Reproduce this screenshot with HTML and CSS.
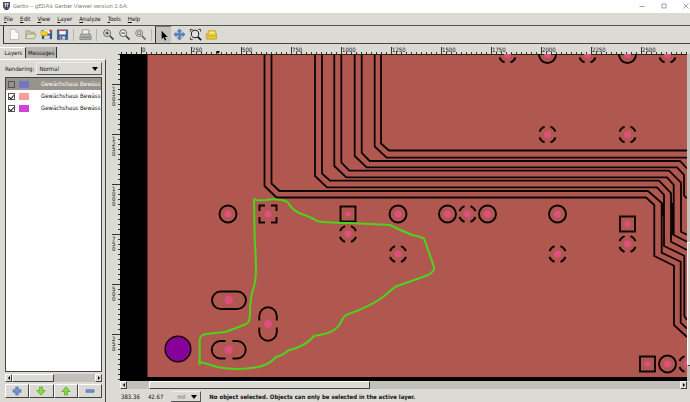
FILE: index.html
```
<!DOCTYPE html>
<html lang="en">
<head>
    <meta charset="UTF-8">
    <meta name="viewport" content="width=device-width, initial-scale=1.0">
    <title>Gerbv</title>
    <link rel="stylesheet" href="styles.css">
</head>
<body>

    <header class="titlebar">
        <svg class="app-icon" viewBox="0 0 9 10"><path d="M1 1h7v5l-2 3H3L1 6z" fill="#4a5162"/><path d="M2 3h5M3.5 2v4M5.5 2v4" stroke="#dfe3ea" stroke-width=".8"/></svg>
        <h1>Gerbv -- gEDA's Gerber Viewer version 2.6A:</h1>
        <div class="window-buttons">
            <button aria-label="Minimize"><svg viewBox="0 0 6 6"><path d="M.5 3.5h5"/></svg></button>
            <button aria-label="Maximize"><svg viewBox="0 0 6 6"><path d="M1 1h4v4H1z"/></svg></button>
            <button aria-label="Close"><svg viewBox="0 0 6 6"><path d="M.5.5l5 5M5.5.5l-5 5"/></svg></button>
        </div>
    </header>

    <nav class="menubar">
        <button><u>F</u>ile</button>
        <button><u>E</u>dit</button>
        <button><u>V</u>iew</button>
        <button><u>L</u>ayer</button>
        <button><u>A</u>nalyze</button>
        <button><u>T</u>ools</button>
        <button><u>H</u>elp</button>
    </nav>

    <div class="toolbar">
        <button aria-label="New"><svg viewBox="0 0 14 14"><path d="M2.500 1.500h6l3 3v8h-9z" fill="#fafafa" stroke="#a5a5a0" stroke-width=".7"/><path d="M8.500 1.500v3h3" fill="none" stroke="#a5a5a0" stroke-width=".7"/></svg></button>
        <button aria-label="Open"><svg viewBox="0 0 14 14"><path d="M2 11.500V3h4l1 1.500h4V7" fill="#c9cbaa" stroke="#8f9474" stroke-width=".8"/><path d="M1.500 11.500l2-5H13l-2 5z" fill="#dfe2c2" stroke="#8f9474" stroke-width=".8"/></svg></button>
        <button aria-label="Revert"><svg viewBox="0 0 14 14"><path d="M2 2h11v10H2z" fill="#35558f"/><path d="M4 2h7v4H4z" fill="#f0f3fa"/><path d="M4.500 8h6v4h-6z" fill="#d4d7dc"/><path d="M1 8V3h3l1 1h3v4z" fill="#f3cf20" stroke="#c3a014" stroke-width=".5"/><path d="M10 2h3v2h-3z" fill="#c9482c"/></svg></button>
        <button aria-label="Save"><svg viewBox="0 0 14 14"><path d="M1.500 2h11v10.500h-11z" fill="#35609f" stroke="#27477c" stroke-width=".6"/><path d="M3.500 2h7v5h-7z" fill="#f5f6fa"/><path d="M3.500 2h7v1.300h-7z" fill="#d4443c"/><path d="M4 9h6v3.500H4z" fill="#c9ccd0"/><path d="M5 9.500h1.500V12H5z" fill="#3a4a66"/></svg></button>
        <span class="separator"></span>
        <button aria-label="Print"><svg viewBox="0 0 14 14"><path d="M3.500 7V2h7v5" fill="#eee" stroke="#888" stroke-width=".8"/><path d="M2 6.500h10l1 3v3H1v-3z" fill="#b4b4af" stroke="#777" stroke-width=".8"/><path d="M2.500 10h9" stroke="#666" stroke-width=".8"/></svg></button>
        <span class="separator"></span>
        <button aria-label="Zoom in"><svg viewBox="0 0 14 14"><circle cx="5.500" cy="5.500" r="3.700" fill="#eef0f0" stroke="#555"/><path d="M8.500 8.500l4 4" stroke="#444" stroke-width="1.600"/><path d="M5.500 3.500v4M3.500 5.500h4" stroke="#222"/></svg></button>
        <button aria-label="Zoom out"><svg viewBox="0 0 14 14"><circle cx="5.500" cy="5.500" r="3.700" fill="#eef0f0" stroke="#555"/><path d="M8.500 8.500l4 4" stroke="#444" stroke-width="1.600"/><path d="M3.500 5.500h4" stroke="#222"/></svg></button>
        <button aria-label="Zoom to fit"><svg viewBox="0 0 14 14"><circle cx="5.500" cy="5.500" r="3.700" fill="#e4e6e4" stroke="#777"/><path d="M8.500 8.500l4 4" stroke="#666" stroke-width="1.600"/><path d="M4 4h3v3H4z" fill="none" stroke="#777"/></svg></button>
        <span class="separator"></span>
        <button class="pressed" aria-label="Select"><svg viewBox="0 0 14 14"><path d="M5 2v9l2-2 1.500 3.500 1.500-.6-1.500-3.400h3z" fill="#000"/></svg></button>
        <button aria-label="Move"><svg viewBox="0 0 14 14"><path d="M7 1l2.200 2.500H7.800v2.700h2.700V4.800L13 7l-2.500 2.200V7.800H7.800v2.700h1.400L7 13l-2.200-2.500h1.400V7.800H3.500v1.400L1 7l2.500-2.200v1.400h2.700V3.500H4.800z" fill="#5b8cd0" stroke="#2d5b9f" stroke-width=".6"/></svg></button>
        <button aria-label="Zoom area"><svg viewBox="0 0 14 14"><path d="M1.500 4V1.500H4M10 1.500h2.500V4M1.500 10v2.500H4" fill="none" stroke="#222" stroke-width=".9"/><circle cx="6.500" cy="6.500" r="4" fill="#e2e3df" stroke="#222" stroke-width="1.100"/><path d="M9.500 9.500l3.500 3.500" stroke="#111" stroke-width="1.800"/></svg></button>
        <button aria-label="Measure"><svg viewBox="0 0 14 14"><path d="M1.500 6h2V3h8v3h1v6h-11z" fill="#e9cc2f" stroke="#b4962a" stroke-width=".7"/><path d="M4.500 4h6v2h-6z" fill="#f7ea8e"/><path d="M2 8.500h10" stroke="#b89c2a" stroke-width=".7"/></svg></button>
    </div>

    <main class="workspace">
        <aside class="sidebar">
            <div class="tabs">
                <button class="tab active">Layers</button>
                <button class="tab">Messages</button>
            </div>
            <div class="panel">
                <div class="rendering">
                    <label for="rendering">Rendering:</label>
                    <div class="select-box">
                        <select id="rendering"><option>Normal</option></select>
                    </div>
                </div>
                <div class="layer-list">
                    <label class="layer selected"><input type="checkbox"><span class="swatch blue"></span><span>Gewächshaus Bewäss</span></label>
                    <label class="layer"><input type="checkbox" checked><span class="swatch salmon"></span><span>Gewächshaus Bewäss</span></label>
                    <label class="layer"><input type="checkbox" checked><span class="swatch magenta"></span><span>Gewächshaus Bewäss</span></label>
                </div>
                <div class="scrollbar">
                    <button class="arrow left" aria-label="Scroll left"></button>
                    <div class="track"><div class="thumb list-thumb"></div></div>
                    <button class="arrow right" aria-label="Scroll right"></button>
                </div>
                <div class="layer-buttons">
                    <button aria-label="Add layer"><svg viewBox="0 0 10 10"><path d="M3.700 1h2.600v2.700H9v2.600H6.300V9H3.700V6.300H1V3.700h2.700z" fill="#6d95cb" stroke="#3f68a4" stroke-width=".6"/></svg></button>
                    <button aria-label="Move down"><svg viewBox="0 0 10 10"><path d="M3.500 1h3v3.500h2.700L5 9.200.8 4.500h2.700z" fill="#86dc3a" stroke="#4a9c1c" stroke-width=".6"/></svg></button>
                    <button aria-label="Move up"><svg viewBox="0 0 10 10"><path d="M3.500 9h3V5.500h2.700L5 .8.800 5.500h2.700z" fill="#86dc3a" stroke="#4a9c1c" stroke-width=".6"/></svg></button>
                    <button aria-label="Remove layer"><svg viewBox="0 0 10 10"><path d="M1 3.700h8v2.600H1z" fill="#6d95cb" stroke="#3f68a4" stroke-width=".6"/></svg></button>
                </div>
            </div>
        </aside>

        <section class="viewer">
            <div class="ruler-top">
                <span>0</span><span class="marked">250</span><span>500</span><span>750</span><span>1000</span><span>1250</span><span>1500</span><span>1750</span><span>2000</span><span>2250</span><span>2500</span>
            </div>
            <div class="ruler-left">
                <span>1500</span><span>1250</span><span>1000</span><span>750</span><span>500</span><span>250</span>
            </div>

            <div class="board">
                <svg viewBox="120 54 567 327" preserveAspectRatio="xMinYMin slice">
                    <defs>
                        <g id="round"><circle class="outline" r="8.500"/><circle class="dot" r="3.500"/></g>
                        <g id="thermal"><circle class="outline" r="8.500" pathLength="80" stroke-dasharray="11 9" stroke-dashoffset="-4.500"/><circle class="dot" r="3.500"/></g>
                        <g id="square"><rect class="outline" x="-7.500" y="-7.500" width="15" height="15"/><circle class="dot" r="2.800"/></g>
                    </defs>
                    <rect x="120" y="54" width="567" height="327" fill="#000"/>
                    <rect x="147.500" y="54" width="539.500" height="323" fill="#b05850"/>

                    <!-- traces -->
                    <g class="trace">
                        <path d="M381 54v89.500l8 7h298"/>
                        <path d="M374.700 54v92.500l12 11.200H687"/>
                        <path d="M361.700 54v99l8 8H680l7 7.500"/>
                        <path d="M354.700 54v102l12 11.300H677l7 7.500v20.500l3 3"/>
                        <path d="M341.300 54v108.500l8 8.200H669l12 12v49l6 3"/>
                        <path d="M334.300 54v112l12 11.300H667l6.700 7.500V235l13.300 6.700"/>
                        <path d="M322 54v119.500l8 7.200h329l12 12.300v48.700l16 8.300"/>
                        <path d="M315 54v122l12 11.300h330l7 7.500V246l20.300 9.700V316l2.700 4"/>
                        <path d="M271.500 54v129.500l8 7.500H648l13.700 12v49.700l19 9v61l6.300 6"/>
                        <path d="M264.500 54v132l12 11.500H646l8.300 7.500v51l19.700 9.700V325l13 12"/>
                        <path d="M663 203v13M672.500 203v32"/>
                    </g>
                    <path d="M147 54.500h540" stroke="#321" stroke-width="1"/>

                    <!-- pads -->
                    <use href="#thermal" x="507.500" y="54.500"/>
                    <use href="#round" x="547.500" y="54.500"/>
                    <use href="#thermal" x="587.500" y="54.500"/>
                    <use href="#round" x="627.500" y="54.500"/>
                    <use href="#thermal" x="667.500" y="54.500"/>
                    <use href="#thermal" x="547.500" y="134.500"/>
                    <use href="#thermal" x="627.500" y="134.500"/>
                    <use href="#round" x="228" y="214"/>
                    <use href="#square" x="348" y="214"/>
                    <use href="#round" x="398" y="214"/>
                    <use href="#round" x="447.500" y="214"/>
                    <use href="#thermal" x="467.500" y="214"/>
                    <use href="#round" x="487.500" y="214"/>
                    <use href="#round" x="557.500" y="214"/>
                    <use href="#square" x="627.500" y="224"/>
                    <use href="#thermal" x="348" y="234"/>
                    <use href="#thermal" x="627.500" y="244"/>
                    <use href="#thermal" x="398" y="254"/>
                    <use href="#thermal" x="557.500" y="254"/>
                    <use href="#square" x="647.500" y="364"/>
                    <use href="#round" x="667.500" y="364"/>
                    <use href="#thermal" x="687.500" y="364"/>
                    <path class="outline" d="M265 205.500h-5.500v5.500M271 205.500h5.500v5.500M259.500 217v5.500h5.500M276.500 217v5.500H271"/>
                    <circle class="dot" cx="268" cy="214" r="3.500"/>
                    <rect class="outline" x="212" y="291.500" width="34" height="17.500" rx="8.700"/>
                    <circle class="dot" cx="228.700" cy="300" r="4"/>
                    <path class="outline" d="M225.500 341H220.500a8.700 8.700 0 0 0 0 17.500h5M232.500 341h4.500a8.700 8.700 0 0 1 0 17.500h-4.500"/>
                    <circle class="dot" cx="228.700" cy="350" r="4"/>
                    <path class="outline" d="M259.300 320.500V316a8.700 8.700 0 0 1 17.500 0v4.500M259.300 327.500v4.500a8.700 8.700 0 0 0 17.500 0v-4.500"/>
                    <circle class="dot" cx="268" cy="324" r="4"/>
                    <circle cx="178" cy="349" r="12.800" fill="#87009a" stroke="#160008" stroke-width="1.500"/>

                    <!-- hand drawn outline -->
                    <path class="marker" d="M199.700 365V341Q199.500 335 206 334Q216 333 225 332Q237 328 246 324Q250 322 250 314Q250 302 252 293Q256 282 256 272Q256 256 254.700 240L254 199Q257 201 266 200Q272 199 277 199.500Q285 200 288 202.500Q291 209 300 213.500Q311 217 317 221Q322 222.500 350 223L390 225Q402 231 412 235Q419 236 424 238.500L434 267Q435 271 428 275Q415 280 397 286Q393 288 385 295.500Q372 306 346 315Q343 317 340 324Q335 332 322 334.500L314 336Q309 342 300 346.500Q294 349 288 350.500Q284 355 276 357Q270 364 260 366.500Q240 371 217 367Q208 364 198 361.500"/>
                </svg>
            </div>

            <div class="scroll-vertical"><div class="thumb"></div></div>
            <div class="scrollbar scroll-bottom">
                <button class="arrow left" aria-label="Scroll left"></button>
                <div class="track"><div class="thumb board-thumb"></div></div>
                <button class="arrow right" aria-label="Scroll right"></button>
            </div>

            <footer class="status">
                <span class="coordinate">383.36</span>
                <span class="coordinate">42.67</span>
                <div class="select-box unit">
                    <select aria-label="Unit"><option>mil</option></select>
                </div>
                <strong>No object selected. Objects can only be selected in the active layer.</strong>
            </footer>
        </section>
    </main>

</body>
</html>
```
FILE: styles.css
```
* {
    box-sizing: border-box;
}

body {
    margin: 0;
    height: 100vh;
    display: flex;
    flex-direction: column;
    overflow: hidden;
    background-color: #dcdad5;
    color: #111;
    font-family: "DejaVu Sans Condensed", "DejaVu Sans", sans-serif;
    font-size: 6px;
    line-height: 10px;
}

button,
select {
    padding: 0;
    border: 0;
    background: none;
    color: inherit;
    font: inherit;
}

svg {
    display: block;
}

/* Window title */
.titlebar {
    height: 13px;
    flex: none;
    display: flex;
    align-items: center;
    gap: 2px;
    padding: 0 1px 2px 2px;
    background-color: #fff;
    color: #888;
}

.app-icon {
    width: 9px;
    height: 10px;
}

.titlebar h1 {
    margin: 0;
    font-family: Roboto, sans-serif;
    font-size: 6px;
    font-weight: normal;
}

.window-buttons {
    display: flex;
    gap: 16px;
    margin-left: auto;
}

.window-buttons svg {
    width: 6px;
    height: 6px;
    fill: none;
    stroke: #777;
    stroke-width: 0.7;
}

/* Menu and toolbar */
.menubar {
    height: 13px;
    flex: none;
    display: flex;
    align-items: center;
    gap: 7px;
    padding-left: 4px;
    border-bottom: 1px solid #55534f;
}

.toolbar {
    height: 18px;
    flex: none;
    display: flex;
    align-items: center;
    margin-left: 3px;
    padding-left: 2px;
    border-left: 1px solid #333;
    border-bottom: 1px solid #444;
}

.toolbar button {
    width: 16px;
    height: 17px;
    display: flex;
    align-items: center;
    justify-content: center;
}

.toolbar svg {
    width: 13px;
    height: 13px;
}

.toolbar .pressed {
    background-color: #c4c2bd;
    border-left: 1px solid #333;
    border-top: 1px solid #777;
}

.separator {
    width: 1px;
    height: 12px;
    margin: 0 3px;
    background-color: #b5b3ae;
}

/* Left side */
.workspace {
    flex: 1;
    min-height: 0;
    display: flex;
}

.sidebar {
    width: 106px;
    flex: none;
    display: flex;
    flex-direction: column;
    padding-top: 3px;
}

.tabs {
    display: flex;
    height: 12px;
}

.tab {
    height: 11px;
    padding: 0 2px;
    background-color: #b8b6b1;
    border-right: 1px solid #333;
}

.tab.active {
    width: 26px;
    padding-left: 4px;
    background: none;
    border-top: 1px solid #fff;
}

.panel {
    flex: 1;
    min-height: 0;
    display: flex;
    flex-direction: column;
    padding: 2px 3px 4px 5px;
    border-top: 1px solid #fff;
    border-right: 1px solid #444;
}

.rendering {
    display: flex;
    align-items: center;
    gap: 2px;
    height: 13px;
    margin-bottom: 2px;
}

.select-box {
    position: relative;
    flex: 1;
    height: 13px;
    border: 1px solid #eee;
    border-right-color: #555;
    border-bottom-color: #555;
}

.select-box select {
    width: 100%;
    height: 11px;
    padding-left: 2px;
    appearance: none;
}

.select-box::after {
    content: "";
    position: absolute;
    right: 3px;
    top: 4px;
    border: 3px solid transparent;
    border-top: 4px solid #000;
    border-bottom: 0;
}

.layer-list {
    flex: 1;
    min-height: 0;
    overflow: hidden;
    border: 1px solid #444;
    background-color: #fff;
}

.layer {
    display: flex;
    align-items: center;
    height: 12px;
    padding-left: 2px;
    white-space: nowrap;
}

.layer.selected {
    background-color: #96948c;
    color: #fff;
}

.layer input {
    appearance: none;
    width: 7px;
    height: 7px;
    flex: none;
    margin: 0 4px 0 0;
    border: 1px solid #555;
}

.layer input:checked::before {
    content: "";
    display: block;
    width: 2px;
    height: 4px;
    margin-left: 1px;
    border: solid #222;
    border-width: 0 1px 1px 0;
    transform: rotate(40deg);
}

.swatch {
    width: 10px;
    height: 7px;
    flex: none;
    margin-right: 12px;
}

.blue {
    background-color: #7476c4;
}

.salmon {
    background-color: #fa9d9d;
}

.magenta {
    background-color: #cf43de;
}

.scrollbar {
    display: flex;
    height: 8px;
    background-color: #c2c0bb;
}

.sidebar .scrollbar {
    flex: none;
    margin-top: 2px;
}

.arrow {
    width: 7px;
    height: 8px;
    flex: none;
    display: flex;
    align-items: center;
    justify-content: center;
    background-color: #dcdad5;
    border: 1px solid #fff;
    border-right-color: #444;
    border-bottom-color: #444;
}

.arrow::before {
    content: "";
    border: 2px solid transparent;
}

.arrow.left::before {
    border-left: 0;
    border-right-color: #000;
}

.arrow.right::before {
    border-right: 0;
    border-left-color: #000;
}

.track {
    flex: 1;
}

.thumb {
    height: 100%;
    background-color: #dcdad5;
    border: 1px solid #fff;
    border-right-color: #444;
    border-bottom-color: #444;
}

.list-thumb {
    width: 50%;
}

.board-thumb {
    width: 40%;
    margin-left: 4%;
}

.layer-buttons {
    display: grid;
    grid-template-columns: repeat(4, 1fr);
    height: 14px;
    flex: none;
    margin-top: 2px;
}

.layer-buttons button {
    display: flex;
    align-items: center;
    justify-content: center;
    border: 1px solid #fff;
    border-right-color: #444;
    border-bottom-color: #444;
}

.layer-buttons svg {
    width: 10px;
    height: 10px;
}

/* Board with rulers */
.viewer {
    flex: 1;
    min-width: 0;
    display: grid;
    grid-template-columns: 8px minmax(0, 1fr) 3px;
    grid-template-rows: 7px minmax(0, 1fr) 8px 13px;
    padding: 3px 0 0 6px;
    font-size: 6px;
}

.ruler-top {
    grid-column: 2;
    display: flex;
    overflow: hidden;
    padding-left: 21px;
    background: repeating-linear-gradient(to right, transparent 0 1px, #333 1px 2px, transparent 2px 5px) bottom / 100% 2px no-repeat;
    line-height: 6px;
}

.ruler-top span {
    position: relative;
    width: 50px;
    flex: none;
    border-left: 1px solid #333;
}

/* cursor marker */
.ruler-top .marked::after {
    content: "";
    position: absolute;
    left: 24px;
    top: 4px;
    border: 2px solid transparent;
    border-top: 3px solid #000;
    border-bottom: 0;
}

.ruler-left {
    grid-column: 1;
    grid-row: 2;
    overflow: hidden;
    padding-top: 30px;
    background: repeating-linear-gradient(to bottom, #333 0 1px, transparent 1px 5px) right / 2px 100% no-repeat;
    line-height: 5px;
}

.ruler-left span {
    display: block;
    width: 8px;
    height: 50px;
    padding: 1px 4px 0 0;
    border-top: 1px solid #333;
    word-break: break-all;
}

.board {
    grid-column: 2;
    grid-row: 2;
    overflow: hidden;
    background-color: #000;
}

.board svg {
    width: 100%;
    height: 100%;
}

.trace {
    fill: none;
    stroke: #0c0404;
    stroke-width: 1.8;
}

.outline {
    fill: none;
    stroke: #0c0404;
    stroke-width: 1.9;
}

.dot {
    fill: #dc4f80;
}

.marker {
    fill: none;
    stroke: #4cd41c;
    stroke-width: 2;
    stroke-linejoin: round;
}

.scroll-vertical {
    grid-column: 3;
    grid-row: 2;
    background-color: #c2c0bb;
}

.scroll-vertical .thumb {
    height: 38%;
    margin-top: 188px;
    border-right: 0;
}

.scroll-bottom {
    grid-column: 2;
    grid-row: 3;
}

.status {
    grid-column: 2 / 4;
    grid-row: 4;
    display: flex;
    align-items: center;
    gap: 8px;
    padding: 2px 0 0 1px;
    white-space: nowrap;
}

.unit {
    flex: none;
    width: 30px;
    height: 11px;
    border-left: 0;
    color: #666;
}

.unit select {
    height: 9px;
    padding-left: 6px;
}

.unit::after {
    top: 3px;
}
```
